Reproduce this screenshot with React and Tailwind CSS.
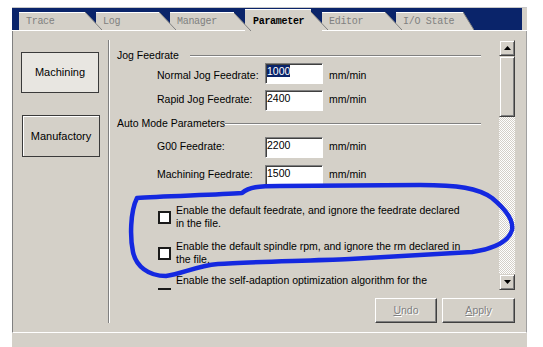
import React from "react";

const tabs = [
  { label: "Trace", w: 77 },
  { label: "Log", w: 74 },
  { label: "Manager", w: 75 },
  { label: "Parameter", w: 77, active: true },
  { label: "Editor", w: 74 },
  { label: "I/O State", w: 78, last: true },
];

function Tab({ tab, first }) {
  return (
    <div
      className={
        tab.active
          ? "relative shrink-0 h-[22px] bg-[#d4d0c8] border-t border-white"
          : "relative shrink-0 h-[19px] bg-[#d4d0c8] border-t border-white border-b"
      }
      style={{ width: tab.w }}
    >
      {!first && (
        <svg className="absolute left-[-11px] bottom-[-1px]" width="17" height="23">
          <polygon points="0,0 11,0 11,15.6 0,4" fill="#0a246a" />
          <line x1="0" y1="4" x2="17" y2="22" stroke="#808080" strokeWidth="1" />
        </svg>
      )}
      {tab.last && (
        <svg className="absolute right-0 bottom-[-1px]" width="11" height="23">
          <polygon points="0,0 11,0 11,22 0,4" fill="#0a246a" />
          <line x1="0" y1="4" x2="11" y2="22" stroke="#808080" strokeWidth="1" />
        </svg>
      )}
      <div
        className={
          tab.active
            ? "relative pl-[8px] pt-[6px] leading-[12px] text-[10px] tracking-[-0.3px] text-black font-bold"
            : "relative pl-[7px] pt-[3px] leading-[12px] text-[10px] tracking-[-0.3px] text-[#808080]"
        }
        style={{ fontFamily: '"Liberation Mono", "DejaVu Sans Mono", monospace' }}
      >
        {tab.label}
      </div>
    </div>
  );
}

function GroupHeader({ label, gap, mt }) {
  return (
    <div className={`flex items-center h-[13px] pl-[7px] pr-[18px] ${mt}`}>
      <span className="leading-[13px] whitespace-nowrap">{label}</span>
      <div className={`flex-1 flex flex-col ${gap}`}>
        <div className="h-px bg-[#808080]" />
        <div className="h-px bg-white" />
      </div>
    </div>
  );
}

function Field({ label, value, selected, mt, pt }) {
  return (
    <div className={`flex h-[21px] shrink-0 pl-[47px] ${mt}`}>
      <div className={`w-[108px] leading-[13px] ${pt}`}>{label}</div>
      <div className="w-[58px] h-[21px] bg-white border border-t-[#808080] border-l-[#808080] border-b-white border-r-white shadow-[inset_1px_1px_0_#404040]">
        <div className="pl-[1px] pt-[1px] leading-[13px]">
          {selected ? <span className="bg-[#0a246a] text-white">{value}</span> : value}
        </div>
      </div>
      <div className={`ml-[6px] leading-[13px] ${pt}`}>mm/min</div>
    </div>
  );
}

function Check({ lines, mt, boxMt }) {
  return (
    <div className={`flex shrink-0 pl-[48px] ${boxMt ? "items-start" : "items-center"} ${mt}`}>
      <div className={`w-[13px] h-[13px] shrink-0 bg-white border-2 border-[#1a1a1a] ${boxMt || ""}`} />
      <div className="ml-[5px] leading-[13px] whitespace-nowrap">
        {lines.map((l, i) => (
          <div key={i}>{l}</div>
        ))}
      </div>
    </div>
  );
}

function Arrow({ down }) {
  return (
    <div className="w-[16px] h-[16px] shrink-0 bg-[#d4d0c8] border border-t-[#d4d0c8] border-l-[#d4d0c8] border-b-[#404040] border-r-[#404040] shadow-[inset_1px_1px_0_#fff,inset_-1px_-1px_0_#808080] flex items-center justify-center">
      <svg width="7" height="4">
        {down ? <polygon points="0,0 7,0 3.5,4" fill="#000" /> : <polygon points="0,4 7,4 3.5,0" fill="#000" />}
      </svg>
    </div>
  );
}

function WinButton({ children, w }) {
  return (
    <div
      className={`${w} h-[25px] bg-[#d4d0c8] border border-t-white border-l-white border-b-[#404040] border-r-[#404040] shadow-[inset_-1px_-1px_0_#808080] flex items-center justify-center text-[#808080] [text-shadow:1px_1px_0_#fff]`}
    >
      {children}
    </div>
  );
}

export default function App() {
  return (
    <div
      className="relative w-[543px] h-[347px] bg-white overflow-hidden text-[10.5px] text-black"
      style={{ fontFamily: '"Liberation Sans", Arial, sans-serif' }}
    >
      <div className="ml-[12px] w-[515px] pt-[7px]">
        <div className="h-px bg-[#c8c8c8]" />
        {/* tab strip */}
        <div className="flex items-end h-[23px] bg-[#0a246a]">
          <div className="w-[7px] h-full border-b border-white" />
          {tabs.map((t, i) => (
            <Tab key={t.label} tab={t} first={i === 0} />
          ))}
          <div className="flex-1 h-full border-b border-white" />
          <div className="w-[5px] h-full bg-[#d4d0c8] border-b border-white" />
        </div>

        {/* panel */}
        <div className="flex h-[302px] bg-[#d4d0c8] border-l border-[#808080] border-r border-r-[#a0a0a0] border-b border-b-white">
          <div className="w-[95px] shrink-0 pl-[8px] pt-[21px] flex flex-col">
            <div className="w-[78px] h-[41px] flex items-center justify-center bg-[#e8e6e1] border border-[#3a3a3a] text-[11px]">
              Machining
            </div>
            <div className="ml-[1px] mt-[22px] w-[78px] h-[42px] flex items-center justify-center border border-[#3a3a3a] shadow-[inset_1px_1px_0_#fff] text-[11px]">
              Manufactory
            </div>
          </div>

          <div className="my-[9px] flex">
            <div className="w-px bg-[#808080]" />
            <div className="w-px bg-white" />
          </div>

          <div className="flex-1 flex flex-col pt-[9px]">
            <div className="flex h-[250px]">
              <div className="flex-1 overflow-hidden flex flex-col">
                <GroupHeader label="Jog Feedrate" gap="ml-[11px]" mt="mt-[9px]" />
                <Field label="Normal Jog Feedrate:" value="1000" selected mt="mt-[1px]" pt="pt-[6px]" />
                <Field label="Rapid Jog Feedrate:" value="2400" mt="mt-[6px]" pt="pt-[3px]" />
                <GroupHeader label="Auto Mode Parameters" gap="ml-0" mt="mt-[6px]" />
                <Field label="G00 Feedrate:" value="2200" mt="mt-[7px]" pt="pt-[3px]" />
                <Field label="Machining Feedrate:" value="1500" mt="mt-[7px]" pt="pt-[3px]" />
                <Check
                  mt="mt-[18px]"
                  lines={["Enable the default feedrate, and ignore the feedrate declared", "in the file."]}
                />
                <Check
                  mt="mt-[10px]"
                  lines={["Enable the default spindle rpm, and ignore the rm declared in", "the file."]}
                />
                <Check
                  mt="mt-[8px]"
                  boxMt="mt-[14px]"
                  lines={["Enable the self-adaption optimization algorithm for the"]}
                />
              </div>

              {/* scrollbar */}
              <div className="w-[16px] flex flex-col">
                <Arrow />
                <div className="h-[61px] shrink-0 bg-[#d4d0c8] border border-t-[#d4d0c8] border-l-[#d4d0c8] border-b-[#404040] border-r-[#404040] shadow-[inset_1px_1px_0_#fff,inset_-1px_-1px_0_#808080]" />
                <div className="flex-1 bg-[repeating-conic-gradient(#ffffff_0%_25%,#d4d0c8_0%_50%)] bg-[length:2px_2px]" />
                <Arrow down />
              </div>
              <div className="w-[11px]" />
            </div>

            <div className="mt-[8px] flex justify-end gap-[5px] pr-[11px]">
              <WinButton w="w-[62px]">
                <span>
                  <span className="underline">U</span>ndo
                </span>
              </WinButton>
              <WinButton w="w-[73px]">
                <span>
                  <span className="underline">A</span>pply
                </span>
              </WinButton>
            </div>
          </div>
        </div>
        <div className="h-[14px] bg-[#d4d0c8]" />
      </div>

      {/* hand-drawn annotation */}
      <svg className="absolute inset-0 pointer-events-none" width="543" height="347">
        <path
          d="M 137 198 C 160 196, 215 195, 242 193 C 249 187, 258 186, 280 186 L 420 185 C 458 185, 478 188, 492 198 C 504 208, 514 220, 512 230 C 509 241, 497 248, 472 252 L 350 259 C 300 261, 245 262, 218 264 C 196 266, 182 274, 166 276 C 148 276, 136 266, 133 252 C 130 238, 130 212, 137 198 Z"
          fill="none"
          stroke="#1428e0"
          strokeWidth="4.5"
          strokeLinejoin="round"
        />
      </svg>
    </div>
  );
}
